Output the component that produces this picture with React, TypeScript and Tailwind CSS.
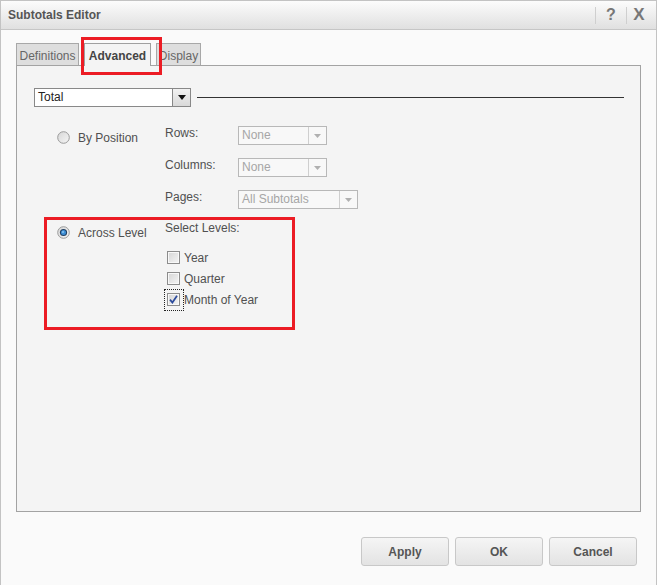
import React from 'react';

const FONT = { fontFamily: '"Liberation Sans", Arial, sans-serif' };

const Radio: React.FC<{ checked?: boolean }> = ({ checked }) => (
  <svg width="13" height="13" viewBox="0 0 13 13">
    <defs>
      <linearGradient id={checked ? 'rg1' : 'rg0'} x1="0" y1="0" x2="1" y2="1">
        <stop offset="0" stopColor="#d6d6d6" />
        <stop offset="1" stopColor="#f6f6f6" />
      </linearGradient>
    </defs>
    <circle cx="6.5" cy="6.5" r="5.8" fill={`url(#${checked ? 'rg1' : 'rg0'})`} stroke="#9a9a9a" strokeWidth="1" />
    {checked && (
      <>
        <circle cx="6.5" cy="6.5" r="3.6" fill="#1f3f63" />
        <circle cx="6.5" cy="6.5" r="2.5" fill="#3d8fd6" />
        <circle cx="6" cy="6" r="1" fill="#8cc4f0" />
      </>
    )}
  </svg>
);

const Checkbox: React.FC<{ checked?: boolean }> = ({ checked }) => (
  <div className="w-[13px] h-[13px] border border-[#8c8c8c] bg-[#f4f4f4] flex items-center justify-center">
    <div className="w-[11px] h-[11px] border border-[#f8f8f8] bg-gradient-to-br from-[#d8d8d8] to-[#f2f2f2] flex items-center justify-center">
      {checked && (
        <svg width="9" height="9" viewBox="0 0 9 9">
          <path d="M1 4.6 L3.4 7.6 L8 0.8" fill="none" stroke="#2b4a9c" strokeWidth="1.7" />
        </svg>
      )}
    </div>
  </div>
);

const DisabledSelect: React.FC<{ value: string; width: string }> = ({ value, width }) => (
  <div className={`${width} h-[19px] border border-[#b8b8b8] bg-[#f8f8f8] flex`}>
    <span className="flex-1 pl-[3px] text-[12px] leading-[17px] text-[#a6a6a6]">{value}</span>
    <div className="w-[18px] border-l border-[#cfcfcf] flex items-center justify-center">
      <svg width="7" height="4" viewBox="0 0 7 4">
        <path d="M0 0 L7 0 L3.5 4 Z" fill="#b0b0b0" />
      </svg>
    </div>
  </div>
);

const Tab: React.FC<{ label: string; active?: boolean; width: string }> = ({ label, active, width }) =>
  active ? (
    <div className={`${width} h-[23px] relative z-10 border border-b-0 border-[#a0a0a0] bg-[#f4f4f4] text-[12px] font-bold text-[#444] flex justify-center pt-[3px]`}>
      {label}
    </div>
  ) : (
    <div className={`${width} h-[22px] border border-b-0 border-[#a8a8a8] bg-[#dedede] text-[12px] text-[#666] flex justify-center pt-[3px]`}>
      {label}
    </div>
  );

const FieldRow: React.FC<{ label: string; children: React.ReactNode }> = ({ label, children }) => (
  <div className="flex">
    <div className="w-[73px] text-[12px] leading-[14px] text-[#505050]">{label}</div>
    {children}
  </div>
);

const Button: React.FC<{ label: string }> = ({ label }) => (
  <div className="w-[88px] h-[29px] rounded-[3px] border border-[#c8c8c8] bg-gradient-to-b from-[#f5f5f5] to-[#e3e3e3] flex items-center justify-center text-[12px] font-bold text-[#555]">
    {label}
  </div>
);

export default function App() {
  return (
    <div className="relative w-[657px] h-[585px] overflow-hidden bg-[#fafafa] border border-b-0 border-[#c3c3c3]" style={FONT}>
      {/* Title bar */}
      <div className="h-[29px] border-b border-[#c6c6c6] bg-gradient-to-b from-[#fcfcfc] to-[#e0e0e0] flex items-center pl-[7px] pr-[5px]">
        <span className="text-[12px] font-bold text-[#555] flex-1">Subtotals Editor</span>
        <div className="w-px h-[17px] bg-[#cfcfcf]" />
        <span className="w-[30px] text-center text-[16px] font-bold text-[#777]">?</span>
        <div className="w-px h-[17px] bg-[#cfcfcf]" />
        <span className="w-[24px] text-center text-[17px] font-bold text-[#777]">X</span>
      </div>

      {/* Body */}
      <div className="px-[15px] pt-[13px]">
        <div className="flex items-start gap-[5px]">
          <Tab label="Definitions" width="w-[63px]" />
          <Tab label="Advanced" width="w-[67px]" active />
          <Tab label="Display" width="w-[45px]" />
        </div>

        <div className="-mt-px h-[447px] border border-[#a3a3a3] bg-[#f4f4f4] pt-[22px] pl-[17px] pr-[16px]">
          {/* Total selector */}
          <div className="flex items-center">
            <div className="w-[157px] h-[19px] border border-[#888] bg-white flex">
              <span className="flex-1 pl-[3px] text-[12px] leading-[17px] text-[#222]">Total</span>
              <div className="w-[18px] border-l border-[#888] bg-gradient-to-b from-[#f2f2f2] to-[#d9d9d9] flex items-center justify-center">
                <svg width="8" height="5" viewBox="0 0 8 5">
                  <path d="M0 0 L8 0 L4 5 Z" fill="#111" />
                </svg>
              </div>
            </div>
            <div className="flex-1 h-px bg-[#333] ml-[6px]" />
          </div>

          {/* By Position */}
          <div className="flex pl-[23px] mt-[19px]">
            <div className="w-[108px] h-[19px] mt-[2px] flex items-center gap-[8px]">
              <Radio />
              <span className="text-[12px] text-[#505050]">By Position</span>
            </div>
            <div className="flex flex-col gap-[13px]">
              <FieldRow label="Rows:">
                <DisabledSelect value="None" width="w-[89px]" />
              </FieldRow>
              <FieldRow label="Columns:">
                <DisabledSelect value="None" width="w-[89px]" />
              </FieldRow>
              <FieldRow label="Pages:">
                <DisabledSelect value="All Subtotals" width="w-[120px]" />
              </FieldRow>
            </div>
          </div>

          {/* Across Level */}
          <div className="flex pl-[23px] mt-[12px]">
            <div className="w-[108px] h-[19px] mt-[2px] flex items-center gap-[8px]">
              <Radio checked />
              <span className="text-[12px] text-[#505050]">Across Level</span>
            </div>
            <div className="flex flex-col">
              <div className="text-[12px] leading-[14px] text-[#505050]">Select Levels:</div>
              <div className="mt-[12px] flex flex-col">
                {['Year', 'Quarter', 'Month of Year'].map((lvl, i) => (
                  <div key={lvl} className="h-[21px] flex items-center pl-[2px] gap-[4px]">
                    <div className={i === 2 ? 'relative' : ''}>
                      <Checkbox checked={i === 2} />
                      {i === 2 && (
                        <div className="absolute -left-[3px] -top-[4px] w-[20px] h-[22px] border border-dotted border-[#222]" />
                      )}
                    </div>
                    <span className="text-[12px] text-[#505050]">{lvl}</span>
                  </div>
                ))}
              </div>
            </div>
          </div>
        </div>

        {/* Buttons */}
        <div className="flex justify-end gap-[6px] pr-[4px] mt-[25px]">
          <Button label="Apply" />
          <Button label="OK" />
          <Button label="Cancel" />
        </div>
      </div>

      {/* Annotation highlights */}
      <div className="absolute left-[80px] top-[36px] w-[81px] h-[38px] border-[3px] border-[#ec1c24] pointer-events-none" />
      <div className="absolute left-[43px] top-[216px] w-[251px] h-[113px] border-[3px] border-[#ec1c24] pointer-events-none" />
    </div>
  );
}
